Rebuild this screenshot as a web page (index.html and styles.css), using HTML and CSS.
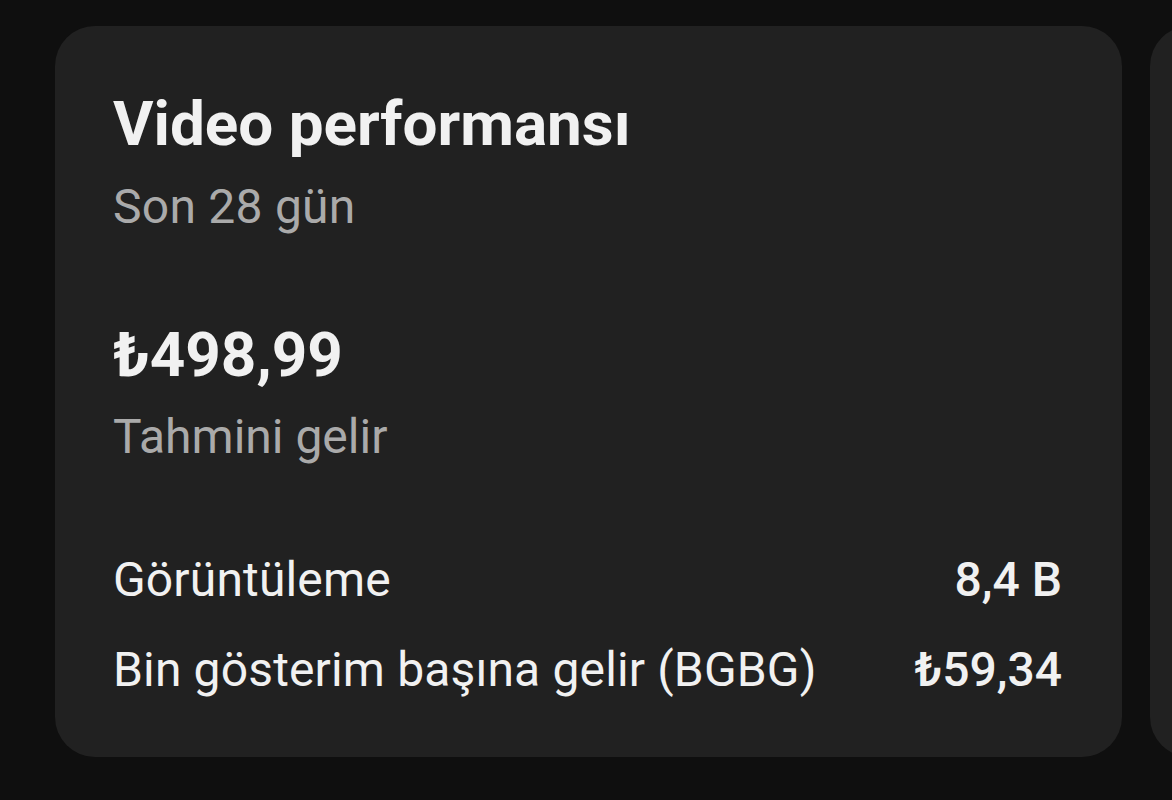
FILE: index.html
```html
<!DOCTYPE html>
<html lang="tr">
<head>
    <meta charset="UTF-8">
    <meta name="viewport" content="width=device-width, initial-scale=1.0">
    <title>Video performansı</title>
    <link rel="stylesheet" href="styles.css">
</head>
<body>

<div class="cards">
    <div class="card">
        <h2 class="title">Video performansı</h2>
        <div class="subtitle">Son 28 gün</div>

        <div class="amount">₺498,99</div>
        <div class="amount-label">Tahmini gelir</div>

        <div class="stats">
            <div class="row">
                <span>Görüntüleme</span>
                <span class="value">8,4 B</span>
            </div>
            <div class="row">
                <span>Bin gösterim başına gelir (BGBG)</span>
                <span class="value">₺59,34</span>
            </div>
        </div>
    </div>
    <!-- sonraki kart -->
    <div class="card card-next"></div>
</div>

</body>
</html>
```

FILE: styles.css
```css
body {
    margin: 0;
    height: 100vh;
    background-color: #0f0f0f;
    font-family: Roboto, "Noto Sans", Arial, sans-serif;
    color: #f1f1f1;
    overflow: hidden;
}
.cards {
    display: flex;
    gap: 28px;
    padding: 26px 0 0 55px;
}
.card {
    flex: 0 0 1067px;
    height: 731px;
    box-sizing: border-box;
    background-color: #212121;
    border-radius: 40px;
    padding: 58px 60px 0 58px;
}
.card-next {
    flex: 0 0 400px;
}
.title {
    margin: 0;
    font-size: 62px;
    font-weight: 700;
    line-height: 80px;
}
.subtitle {
    margin-top: 12px;
    font-size: 48px;
    color: #aaaaaa;
    line-height: 62px;
    letter-spacing: 0.25px;
}
.amount {
    margin-top: 77px;
    font-size: 62px;
    font-weight: 700;
    line-height: 80px;
}
.amount-label {
    margin-top: 11px;
    font-size: 48px;
    color: #aaaaaa;
    line-height: 62px;
}
.stats {
    margin-top: 67px;
}
.row {
    display: flex;
    justify-content: space-between;
    font-size: 48px;
    line-height: 90px;
    letter-spacing: 0.15px;
}
.value {
    font-weight: 500;
    letter-spacing: 0;
}
```
